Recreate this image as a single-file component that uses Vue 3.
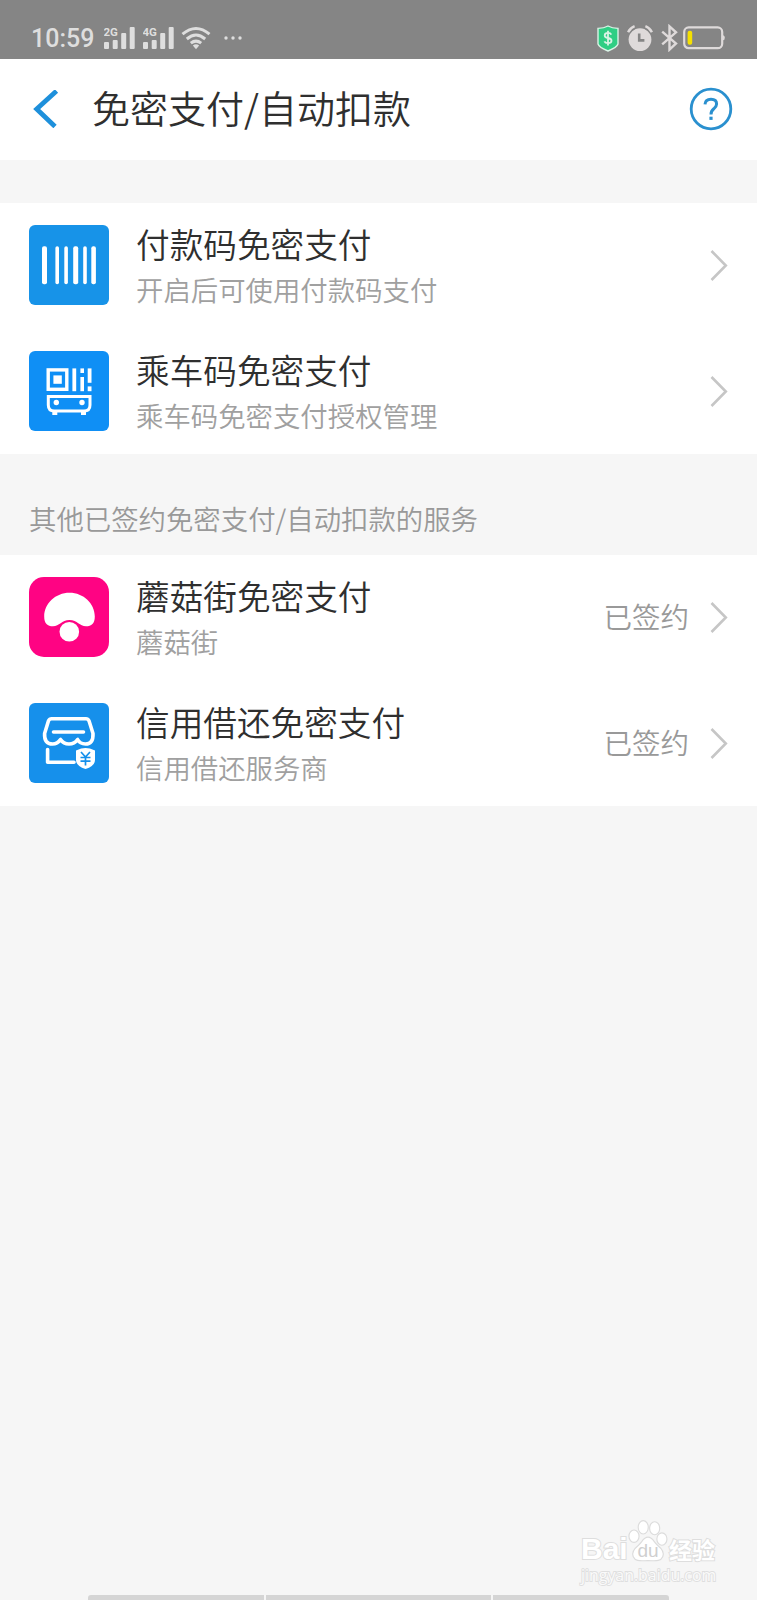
<script setup>
import { ref } from 'vue'

const networks = ref(['2G', '4G'])

const payCodes = ref([
  { icon: 'barcode', title: '付款码免密支付', desc: '开启后可使用付款码支付' },
  { icon: 'bus', title: '乘车码免密支付', desc: '乘车码免密支付授权管理' }
])

const services = ref([
  { icon: 'mushroom', title: '蘑菇街免密支付', desc: '蘑菇街', status: '已签约' },
  { icon: 'shop', title: '信用借还免密支付', desc: '信用借还服务商', status: '已签约' }
])

const groups = ref([
  { label: '', items: payCodes.value },
  { label: '其他已签约免密支付/自动扣款的服务', items: services.value }
])
</script>
<template>
  <div class="page">
    <div class="status-bar">
      <span class="time">10:59</span>
      <svg v-for="net in networks" :key="net" class="signal" width="31" height="24" viewBox="0 0 31 24">
        <text x="-0.5" y="10.2">{{ net }}</text>
        <rect x="0" y="16" width="5" height="7" rx="1" />
        <rect x="8.7" y="14" width="5" height="9" rx="1" />
        <rect x="17.2" y="7" width="5" height="16" rx="1" />
        <rect x="25.7" y="1" width="5" height="22" rx="1" />
      </svg>
      <svg class="wifi" width="30" height="24" viewBox="0 0 30 24">
        <path d="M1.5 8.2Q15 -3.2 28.5 8.2M5.8 13Q15 5 24.2 13M9.8 17.2Q15 13 20.2 17.2" />
        <path class="solid" d="M11.8 19.5Q15 17.2 18.2 19.5L15 23.3z" />
      </svg>
      <svg class="dots" width="18" height="4" viewBox="0 0 18 4">
        <circle cx="2" cy="2" r="1.7" />
        <circle cx="9" cy="2" r="1.7" />
        <circle cx="16" cy="2" r="1.7" />
      </svg>
      <div class="status-right">
        <svg width="22" height="27" viewBox="0 0 22 27">
          <path d="M11 1Q15 3.2 21 3.4V19Q20 22.3 11 26Q2 22.3 1 19V3.4Q7 3.2 11 1z" fill="#2fce84" stroke="#d9f3e6" stroke-width="1.4" />
          <path d="M14.3 9.6Q13.6 7.9 11 7.9Q7.7 7.9 7.7 10.4Q7.7 12.4 11 13Q14.5 13.6 14.5 15.8Q14.5 18.2 11 18.2Q8.2 18.2 7.4 16.4M11 5.8V20.4" fill="none" stroke="#d9f3e6" stroke-width="1.8" />
        </svg>
        <svg class="alarm" width="26" height="27" viewBox="0 0 26 27">
          <circle cx="13" cy="14.6" r="11.4" fill="#dedada" />
          <path d="M1.1 7.4Q3 3.2 7.6 1.4M24.9 7.4Q23 3.2 18.4 1.4" fill="none" stroke="#858585" stroke-width="5" />
          <path d="M1.1 7.2Q3 3 7.6 1.2M24.9 7.2Q23 3 18.4 1.2" fill="none" stroke="#dedada" stroke-width="2.4" />
          <path d="M12.2 8.6V15.4H17.4" fill="none" stroke="#858585" stroke-width="2.6" />
        </svg>
        <svg class="bluetooth" width="17" height="28" viewBox="0 0 17 28">
          <path d="M1.2 7.6L15 19.5L8.5 25.6V2.4L15 8.3L1.2 20.4" fill="none" stroke="#dedada" stroke-width="2.4" />
        </svg>
        <svg class="battery" width="42" height="24" viewBox="0 0 42 24">
          <rect x="1.2" y="1.4" width="38" height="20.8" rx="4.5" fill="none" stroke="#dedada" stroke-width="2.2" />
          <path d="M40 9.3Q41.8 9.3 41.8 11.8Q41.8 14.3 40 14.3z" fill="#dedada" />
          <rect x="4.6" y="4.8" width="4.6" height="14" rx="2" fill="#f5e000" />
        </svg>
      </div>
    </div>

    <div class="header">
      <svg class="back" width="26" height="38" viewBox="0 0 26 38">
        <path d="M23.5 1L3.7 19L22 36.5" fill="none" stroke="#1e90db" stroke-width="4.8" />
      </svg>
      <h1>免密支付/自动扣款</h1>
      <svg class="help" width="44" height="44" viewBox="0 0 44 44">
        <circle cx="22" cy="22" r="19.8" fill="none" stroke="#2a90cf" stroke-width="2.8" />
        <path d="M16 17.4Q16.2 12.2 22 12.2Q27.6 12.2 27.6 17Q27.6 19.4 24.8 21.8Q22 24 22 27.5" fill="none" stroke="#2a90cf" stroke-width="3" />
        <rect x="20.4" y="29.7" width="3.2" height="3.2" fill="#2a90cf" />
      </svg>
    </div>

    <template v-for="(group, index) in groups" :key="index">
      <div class="section" :class="{ labeled: group.label }">{{ group.label }}</div>
      <div class="list">
        <div v-for="item in group.items" :key="item.title" class="row">
          <svg v-if="item.icon === 'barcode'" class="icon" viewBox="0 0 80 80">
            <rect width="80" height="80" rx="6" fill="#1793e8" />
            <g fill="#fff">
              <rect x="13" y="21.3" width="5" height="38" rx="2" />
              <rect x="26.4" y="21.3" width="3.6" height="38" rx="1.8" />
              <rect x="35.3" y="21.3" width="3.6" height="38" rx="1.8" />
              <rect x="44.2" y="21.3" width="5" height="38" rx="2" />
              <rect x="54.2" y="21.3" width="3.6" height="38" rx="1.8" />
              <rect x="62.3" y="21.3" width="4.6" height="38" rx="2" />
            </g>
          </svg>
          <svg v-else-if="item.icon === 'bus'" class="icon" viewBox="0 0 80 80">
            <rect width="80" height="80" rx="6" fill="#0f8ff5" />
            <rect x="19.2" y="18.9" width="18.6" height="19.4" fill="none" stroke="#fff" stroke-width="3.4" />
            <g fill="#fff">
              <rect x="24.4" y="24.4" width="8.4" height="8.4" />
              <rect x="43.4" y="17.4" width="3.8" height="22.8" />
              <rect x="51.4" y="17.4" width="3.6" height="4.6" />
              <rect x="51.4" y="26" width="3.6" height="14.2" />
              <rect x="58.7" y="17.4" width="3.8" height="14.4" />
              <rect x="58.7" y="35.4" width="3.8" height="4.8" />
              <circle cx="27.3" cy="51.5" r="2.7" />
              <circle cx="53" cy="51.5" r="2.7" />
              <rect x="23.3" y="60" width="5" height="4" />
              <rect x="52" y="60" width="5" height="4" />
            </g>
            <path d="M19.3 45.6H61V54Q61 60 55 60H25.3Q19.3 60 19.3 54z" fill="none" stroke="#fff" stroke-width="3" />
          </svg>
          <svg v-else-if="item.icon === 'mushroom'" class="icon" viewBox="0 0 80 80">
            <rect width="80" height="80" rx="15" fill="#ff0383" />
            <path d="M40.5 15.8C54.5 15.8 65.8 26.5 65.8 39.5C65.8 46.5 62.5 49.3 57 49.3C50.5 49.3 48.5 43 40.5 43C32.5 43 30.5 49.3 24 49.3C18.5 49.3 15.2 46.5 15.2 39.5C15.2 26.5 26.5 15.8 40.5 15.8z" fill="#fff" />
            <circle cx="40.3" cy="54.8" r="9.8" fill="#fff" />
          </svg>
          <svg v-else class="icon" viewBox="0 0 80 80">
            <rect width="80" height="80" rx="6" fill="#1690eb" />
            <g fill="none" stroke="#fff" stroke-width="3.6" stroke-linecap="round" stroke-linejoin="round">
              <path d="M22.5 15.8H57Q59 15.8 60 17.8L64 30.5Q64.5 41 56.5 41Q51 41 48.6 36.5Q45.5 41 40 41Q34.5 41 31.5 36.5Q28.5 41 23.5 41Q15 41 15.6 30.5L19.5 17.8Q20.5 15.8 22.5 15.8z" />
              <path d="M24.5 29H54.5M18.6 46.5V59.3H45" />
            </g>
            <path d="M56.5 45Q60.5 45 66 47.4V57Q66 63 56.5 66Q47 63 47 57V47.4Q52.5 45 56.5 45z" fill="#fff" />
            <path d="M52 49L56.5 54L61 49M56.5 54V62.5M51.5 54.5H61.5M51.5 58.2H61.5" fill="none" stroke="#1690eb" stroke-width="1.7" />
          </svg>
          <div class="info">
            <p class="title">{{ item.title }}</p>
            <p class="desc">{{ item.desc }}</p>
          </div>
          <span v-if="item.status" class="state">{{ item.status }}</span>
          <svg class="arrow" width="18" height="32" viewBox="0 0 18 32">
            <path d="M1.5 2L15.8 16.5L1.5 31" fill="none" stroke="#c6c6c6" stroke-width="2.6" />
          </svg>
        </div>
      </div>
    </template>

    <div class="footer">
      <div class="watermark">
        <div class="brand">
          <span class="bai">Bai</span>
          <svg class="paw" width="40" height="46" viewBox="0 0 42 46">
            <g fill="#fff" stroke="#dcdcdc" stroke-width="1.2">
              <ellipse cx="6.3" cy="18" rx="5.3" ry="6.5" />
              <ellipse cx="16" cy="8.6" rx="5.3" ry="7" />
              <ellipse cx="28" cy="9.6" rx="5.3" ry="6.8" />
              <ellipse cx="35.6" cy="21" rx="5.3" ry="6.5" />
              <path d="M21 19C26 19 27 24 31 27.5C36 31.5 38.5 35 36.5 39.5C34 45 28 43.6 21 43.6C14 43.6 8 45 5.5 39.5C3.5 35 6 31.5 11 27.5C15 24 16 19 21 19z" />
            </g>
            <text x="21" y="40" text-anchor="middle">du</text>
          </svg>
          <span class="jingyan">经验</span>
        </div>
        <div class="site">jingyan.baidu.com</div>
      </div>
      <div class="nav-hint">
        <i></i>
        <i class="wide"></i>
        <i></i>
      </div>
    </div>
  </div>
</template>
<style>
body {
  margin: 0;
  background: #f6f6f6;
}
</style>
<style scoped>
.page {
  display: flex;
  flex-direction: column;
  width: 757px;
  height: 1600px;
  overflow: hidden;
  background: #f6f6f6;
  font-family: 'Noto Sans CJK SC', 'Noto Sans', sans-serif;
  font-weight: 350;
}

svg {
  display: block;
  flex: none;
}

.status-bar {
  display: flex;
  align-items: center;
  box-sizing: border-box;
  height: 59px;
  padding: 17px 32px 0 31px;
  background: #858585;
}
.status-bar .time {
  width: 73px;
  padding-top: 2px;
  box-sizing: border-box;
  font-family: Roboto, sans-serif;
  font-size: 25px;
  font-weight: 500;
  line-height: 30px;
  color: #dedede;
}
.signal {
  margin-right: 8px;
  fill: #dedede;
}
.signal text {
  font-family: Roboto, sans-serif;
  font-size: 11.5px;
  font-weight: 700;
}
.wifi {
  margin: 0 13px 0 -1px;
  fill: none;
  stroke: #dedede;
  stroke-width: 3;
}
.wifi .solid {
  fill: #dedede;
  stroke: none;
}
.dots {
  fill: #dedede;
}
.status-right {
  display: flex;
  align-items: center;
  margin-left: auto;
}
.alarm {
  margin-left: 8px;
}
.bluetooth {
  margin-left: 8px;
}
.battery {
  margin-left: 5px;
}

.header {
  display: flex;
  align-items: center;
  box-sizing: border-box;
  height: 101px;
  padding: 0 24px 1px 33px;
  background: #fff;
}
.header h1 {
  flex: 1;
  margin: 0 0 0 33px;
  padding-bottom: 4px;
  font-size: 38px;
  font-weight: 350;
  line-height: 50px;
  color: #2f2f2f;
}

.section {
  height: 43px;
}
.section.labeled {
  box-sizing: border-box;
  height: 101px;
  padding: 43px 29px 0;
  font-size: 27.4px;
  line-height: 42px;
  color: #999;
}

.list {
  background: #fff;
}
.row {
  display: flex;
  align-items: center;
  box-sizing: border-box;
  height: 126px;
  padding: 0 29px 3px 29px;
}
.row + .row {
  height: 125px;
  padding-bottom: 1px;
}
.icon {
  width: 80px;
  height: 80px;
}
.info {
  flex: 1;
  margin-left: 27px;
  padding-top: 3px;
}
.info p {
  margin: 0;
}
.info .title {
  font-size: 33.65px;
  line-height: 46px;
  color: #2f2f2f;
}
.info .desc {
  font-size: 27.4px;
  line-height: 45px;
  color: #a0a0a0;
}
.state {
  margin-right: 21px;
  padding-bottom: 2px;
  font-size: 28.5px;
  line-height: 40px;
  color: #999;
}

.footer {
  display: flex;
  flex-direction: column;
  margin-top: auto;
}
.watermark {
  align-self: flex-end;
  width: 137px;
  margin: 0 39px 10px 0;
}
.brand {
  display: flex;
  align-items: flex-end;
  height: 46px;
}
.bai,
.jingyan,
.site {
  color: #fff;
  white-space: nowrap;
  paint-order: stroke fill;
  -webkit-text-stroke: 2px #dedede;
}
.bai {
  width: 47px;
  font-family: 'Liberation Sans', sans-serif;
  font-size: 30px;
  font-weight: 700;
  line-height: 30px;
}
.paw text {
  font-family: 'Liberation Sans', sans-serif;
  font-size: 20px;
  fill: #cfcfcf;
}
.jingyan {
  margin-left: 1px;
  font-size: 23px;
  font-weight: 700;
  line-height: 30px;
}
.site {
  margin-top: 1px;
  font-family: 'Open Sans', sans-serif;
  font-size: 15.9px;
  font-weight: 400;
  line-height: 20px;
  color: #fafafa;
  -webkit-text-stroke: 1.8px #dfdfdf;
}
.nav-hint {
  display: flex;
  gap: 2px;
  height: 5px;
  padding: 0 88px;
}
.nav-hint i {
  flex: 176;
  background: #d5d5d5;
}
.nav-hint .wide {
  flex: 225;
}
.nav-hint i:first-child {
  border-top-left-radius: 3px;
}
.nav-hint i:last-child {
  border-top-right-radius: 3px;
}
</style>
